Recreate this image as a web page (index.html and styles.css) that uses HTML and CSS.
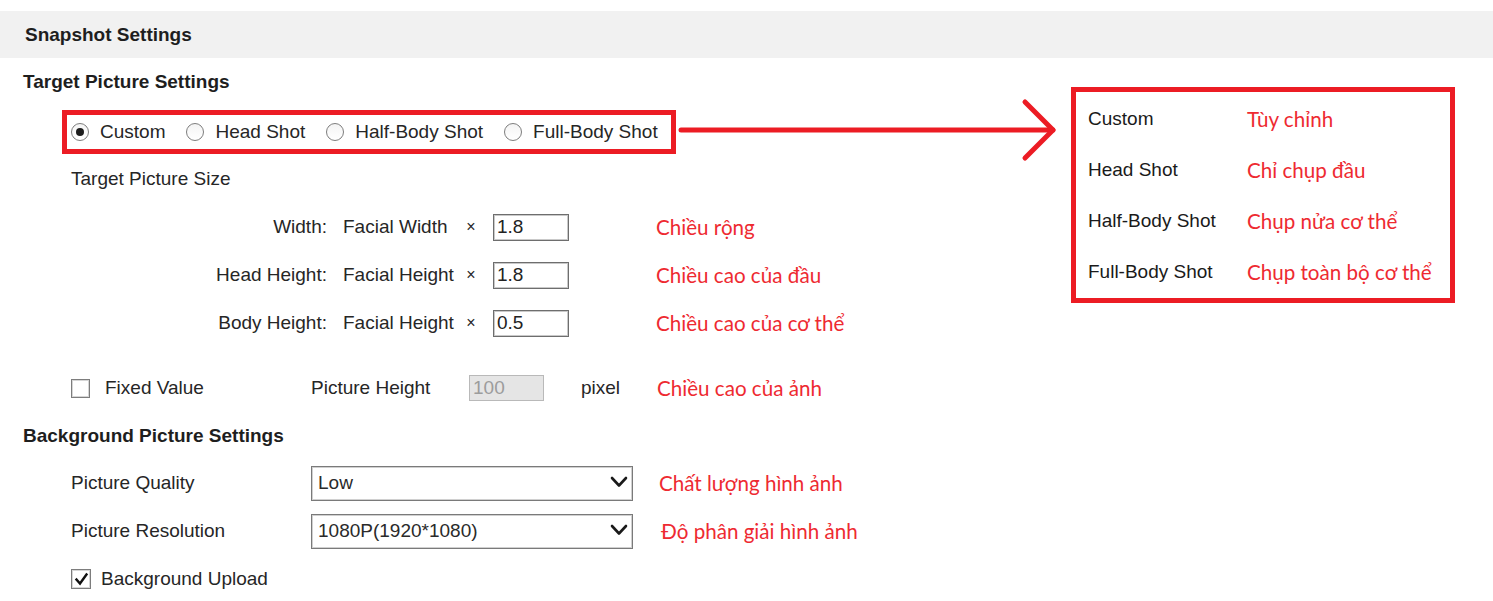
FILE: index.html
```html
<!DOCTYPE html>
<html lang="en">
<head>
<meta charset="utf-8">
<title>Snapshot Settings</title>
<link rel="stylesheet" href="styles.css">
</head>
<body>
<div class="page">
  <div class="header">Snapshot Settings</div>

  <div class="section-title">Target Picture Settings</div>

  <div class="radio-box">
    <span class="radio checked"></span><span class="radio-label">Custom</span>
    <span class="radio"></span><span class="radio-label">Head Shot</span>
    <span class="radio"></span><span class="radio-label">Half-Body Shot</span>
    <span class="radio"></span><span class="radio-label last">Full-Body Shot</span>
  </div>

  <div class="sub-title">Target Picture Size</div>

  <div class="dim-row">
    <span class="dim-label">Width:</span>
    <span class="dim-facial">Facial Width</span>
    <span class="dim-times">×</span>
    <input class="num" type="text" value="1.8">
    <span class="note note-dim">Chiều rộng</span>
  </div>
  <div class="dim-row">
    <span class="dim-label">Head Height:</span>
    <span class="dim-facial">Facial Height</span>
    <span class="dim-times">×</span>
    <input class="num" type="text" value="1.8">
    <span class="note note-dim">Chiều cao của đầu</span>
  </div>
  <div class="dim-row">
    <span class="dim-label">Body Height:</span>
    <span class="dim-facial">Facial Height</span>
    <span class="dim-times">×</span>
    <input class="num" type="text" value="0.5">
    <span class="note note-dim">Chiều cao của cơ thể</span>
  </div>

  <div class="fixed-row">
    <span class="fixed-check"><span class="checkbox"></span><span class="check-label">Fixed Value</span></span>
    <span class="ph-label">Picture Height</span>
    <input class="num disabled" type="text" value="100" disabled>
    <span class="unit">pixel</span>
    <span class="note note-fixed">Chiều cao của ảnh</span>
  </div>

  <div class="section-title bg-title">Background Picture Settings</div>

  <div class="select-row">
    <span class="select-label">Picture Quality</span>
    <div class="select"><span>Low</span>
      <svg class="chev" width="18" height="12" viewBox="0 0 18 12"><path d="M2 2 L9 9.5 L16 2" fill="none" stroke="#1a1a1a" stroke-width="2.6" stroke-linecap="round" stroke-linejoin="round"/></svg>
    </div>
    <span class="note note-sel">Chất lượng hình ảnh</span>
  </div>
  <div class="select-row">
    <span class="select-label">Picture Resolution</span>
    <div class="select"><span>1080P(1920*1080)</span>
      <svg class="chev" width="18" height="12" viewBox="0 0 18 12"><path d="M2 2 L9 9.5 L16 2" fill="none" stroke="#1a1a1a" stroke-width="2.6" stroke-linecap="round" stroke-linejoin="round"/></svg>
    </div>
    <span class="note note-sel2">Độ phân giải hình ảnh</span>
  </div>

  <div class="upload-row">
    <span class="checkbox checked">
      <svg width="15" height="15" viewBox="0 0 15 15"><path d="M2.5 7.5 L6 11.5 L12.5 2.5" fill="none" stroke="#111" stroke-width="2.4" stroke-linecap="square"/></svg>
    </span>
    <span class="check-label up">Background Upload</span>
  </div>

  <svg class="arrow" width="385" height="64" viewBox="0 0 385 64">
    <path d="M5 32 L377 32" stroke="#ec1c24" stroke-width="5" stroke-linecap="round" fill="none"/>
    <path d="M349 4 L377 32 L349 60" stroke="#ec1c24" stroke-width="5" stroke-linecap="round" stroke-linejoin="round" fill="none"/>
  </svg>

  <div class="callout">
    <div class="c-row"><span class="c-en">Custom</span><span class="c-vi">Tùy chỉnh</span></div>
    <div class="c-row"><span class="c-en">Head Shot</span><span class="c-vi">Chỉ chụp đầu</span></div>
    <div class="c-row"><span class="c-en">Half-Body Shot</span><span class="c-vi">Chụp nửa cơ thể</span></div>
    <div class="c-row"><span class="c-en">Full-Body Shot</span><span class="c-vi">Chụp toàn bộ cơ thể</span></div>
  </div>
</div>
</body>
</html>
```

FILE: styles.css
```css
* { box-sizing: border-box; }

html, body {
  margin: 0;
  padding: 0;
  background: #ffffff;
}

body {
  font-family: "Liberation Sans", Arial, sans-serif;
  font-size: 19px;
  color: #262626;
  overflow: hidden;
}

.page {
  position: relative;
  width: 1493px;
  height: 601px;
  padding-top: 11px;
}

.header {
  height: 47px;
  line-height: 47px;
  padding-left: 25px;
  background: #f1f1f1;
  font-weight: bold;
  color: #1e1e1e;
}

.section-title {
  height: 48px;
  line-height: 48px;
  padding-left: 23px;
  font-weight: bold;
  color: #1e1e1e;
}

.bg-title {
  height: 47px;
}

.radio-box {
  margin-top: 4px;
  margin-left: 62px;
  width: 614px;
  height: 44px;
  border: 5px solid #ec1c24;
  display: flex;
  align-items: center;
  padding-left: 4px;
}

.radio {
  width: 18px;
  height: 18px;
  border-radius: 50%;
  border: 1px solid #7d7d7d;
  background: linear-gradient(#f4f4f4, #ffffff);
  margin-right: 11px;
  display: flex;
  align-items: center;
  justify-content: center;
  flex: none;
}

.radio.checked::after {
  content: "";
  width: 8px;
  height: 8px;
  border-radius: 50%;
  background: #1c1c1c;
}

.radio-label {
  margin-right: 21px;
  white-space: nowrap;
}

.radio-label.last {
  margin-right: 0;
}

.sub-title {
  margin-top: 1px;
  height: 48px;
  line-height: 48px;
  padding-left: 71px;
}

.dim-row {
  height: 48px;
  display: flex;
  align-items: center;
}

.dim-label {
  width: 343px;
  padding-right: 16px;
  text-align: right;
  flex: none;
}

.dim-facial {
  width: 118px;
  flex: none;
}

.dim-times {
  width: 20px;
  text-align: center;
  font-size: 16px;
  flex: none;
}

.num {
  font-family: "Liberation Sans", Arial, sans-serif;
  font-size: 19px;
  color: #222;
  width: 76px;
  height: 27px;
  padding: 0 3px;
  border: 1px solid #6e6e6e;
  box-shadow: inset 0 0 0 1px #c9c9c9;
  background: #fff;
  margin: 0 0 0 12px;
  outline: none;
  flex: none;
}

.note {
  font-family: Lato, "Open Sans", sans-serif;
  font-size: 20.6px;
  color: #ee2a31;
  white-space: nowrap;
}

.note-dim {
  margin-left: 87px;
}

.fixed-row {
  margin-top: 17px;
  height: 48px;
  display: flex;
  align-items: center;
}

.fixed-check {
  width: 311px;
  padding-left: 71px;
  display: flex;
  align-items: center;
  flex: none;
}

.checkbox {
  width: 19px;
  height: 19px;
  border: 1px solid #7d7d7d;
  box-shadow: inset 0 0 0 1px #d6d6d6;
  background: #fff;
  flex: none;
  display: flex;
  align-items: center;
  justify-content: center;
}

.check-label {
  margin-left: 15px;
}

.check-label.up {
  margin-left: 10px;
}

.ph-label {
  width: 158px;
  flex: none;
}

.num.disabled {
  margin-left: 0;
  width: 75px;
  height: 26px;
  background: #e5e5e5;
  color: #9c9c9c;
  border: 1px solid #b9b9b9;
  box-shadow: none;
}

.unit {
  margin-left: 37px;
  width: 39px;
  flex: none;
}

.note-fixed {
  margin-left: 37px;
}

.select-row {
  height: 48px;
  display: flex;
  align-items: center;
}

.select-label {
  width: 311px;
  padding-left: 71px;
  flex: none;
}

.select {
  width: 322px;
  height: 35px;
  border: 1px solid #7a7a7a;
  box-shadow: inset 0 0 0 1px #d0d0d0;
  background: #fff;
  display: flex;
  align-items: center;
  justify-content: space-between;
  padding: 0 4px 0 6px;
  flex: none;
  color: #2a2a2a;
}

.chev {
  display: block;
  margin-top: -2px;
}

.note-sel {
  margin-left: 26px;
}

.note-sel2 {
  margin-left: 28px;
}

.upload-row {
  height: 48px;
  display: flex;
  align-items: center;
  padding-left: 71px;
}

.upload-row .checkbox {
  width: 20px;
  height: 20px;
}

.arrow {
  position: absolute;
  left: 676px;
  top: 98px;
}

.callout {
  position: absolute;
  left: 1071px;
  top: 87px;
  width: 384px;
  border: 5px solid #ec1c24;
  padding: 1px 0 1px 12px;
  background: #fff;
}

.c-row {
  height: 51px;
  display: flex;
  align-items: center;
}

.c-en {
  width: 159px;
  flex: none;
  color: #1a1a1a;
}

.c-vi {
  font-family: Lato, "Open Sans", sans-serif;
  font-size: 20.6px;
  color: #ee2a31;
  white-space: nowrap;
}
```
